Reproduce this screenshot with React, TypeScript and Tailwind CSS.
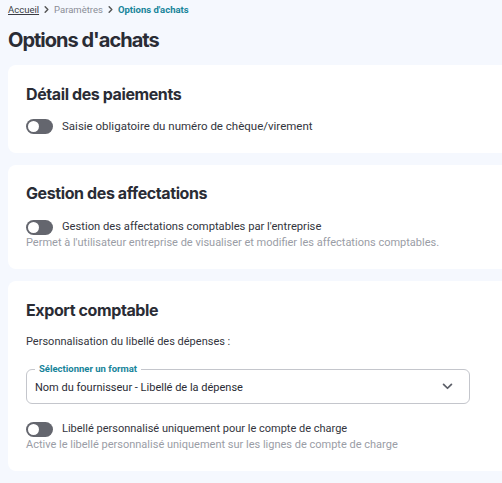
import React from "react";

function Toggle() {
  return (
    <div className="w-[27px] h-[15px] rounded-full bg-[#64666e] flex items-center px-[2px] shrink-0">
      <div className="w-[11px] h-[11px] rounded-full bg-white" />
    </div>
  );
}

function Chevron({ className }: { className?: string }) {
  return (
    <svg viewBox="0 0 10 10" className={className} fill="none" stroke="currentColor" strokeWidth="1.6" strokeLinecap="round" strokeLinejoin="round">
      <path d="M3.5 2 L6.5 5 L3.5 8" />
    </svg>
  );
}

const head = { fontFamily: "Inter, 'Noto Sans', sans-serif" };

export default function App() {
  return (
    <div className="w-full min-h-[483px] bg-[#f5f8fe] overflow-hidden text-[#2a2c35]" style={{ fontFamily: "Roboto, 'Noto Sans', sans-serif" }}>
      <div className="pl-2 w-[540px]">
        <div className="flex items-center gap-[3px] text-[9.5px] h-[18px] pt-[1px] leading-none">
          <span className="underline text-[#3a3c44]">Accueil</span>
          <Chevron className="w-[9px] h-[9px] text-[#555]" />
          <span className="text-[#8a8d96]">Paramètres</span>
          <Chevron className="w-[9px] h-[9px] text-[#555]" />
          <span className="text-[#17849a] font-bold">Options d'achats</span>
        </div>
        <h1 className="text-[20px] font-bold leading-[24px] mt-[10px] tracking-[-1px]" style={head}>Options d'achats</h1>

        <div className="mt-[13px] bg-white rounded-[8px] pl-[18px] pt-[19px] pb-[19px]">
          <h2 className="text-[16px] font-bold leading-[20px] tracking-[-0.4px]" style={head}>Détail des paiements</h2>
          <div className="mt-[14px] flex items-center gap-[9px] h-[16px]">
            <Toggle />
            <span className="text-[11.5px] leading-[16px] text-[#33353d]">Saisie obligatoire du numéro de chèque/virement</span>
          </div>
        </div>

        <div className="mt-[12px] bg-white rounded-[8px] pl-[18px] pt-[18px] pb-[19px]">
          <h2 className="text-[16px] font-bold leading-[20px] tracking-[-0.4px]" style={head}>Gestion des affectations</h2>
          <div className="mt-[16px] flex items-center gap-[9px] h-[16px]">
            <Toggle />
            <span className="text-[11.2px] leading-[16px] text-[#33353d]">Gestion des affectations comptables par l'entreprise</span>
          </div>
          <p className="text-[11px] leading-[15px] text-[#9a9da6]">Permet à l'utilisateur entreprise de visualiser et modifier les affectations comptables.</p>
        </div>

        <div className="mt-[12px] bg-white rounded-[8px] pl-[18px] pt-[19px] pb-[19px]">
          <h2 className="text-[16px] font-bold leading-[20px] tracking-[-0.4px]" style={head}>Export comptable</h2>
          <p className="mt-[14px] text-[11px] leading-[16px] text-[#33353d]">Personnalisation du libellé des dépenses :</p>
          <div className="mt-[19px] relative w-[444px] h-[35px] border border-[#c4c6cc] rounded-[6px] flex items-center justify-between pl-[8px] pr-[16px]">
            <span className="absolute -top-[7px] left-[8px] bg-white px-[4px] text-[9.5px] leading-[12px] font-bold text-[#17849a]">Sélectionner un format</span>
            <span className="text-[11px] text-[#2a2c35] mt-[4px]">Nom du fournisseur - Libellé de la dépense</span>
            <svg viewBox="0 0 12 8" className="w-[11px] h-[7px] text-[#5c5f68]" fill="none" stroke="currentColor" strokeWidth="2" strokeLinecap="round" strokeLinejoin="round">
              <path d="M1.5 1.5 L6 6 L10.5 1.5" />
            </svg>
          </div>
          <div className="mt-[17px] flex items-center gap-[9px] h-[16px]">
            <Toggle />
            <span className="text-[11px] leading-[16px] text-[#33353d]">Libellé personnalisé uniquement pour le compte de charge</span>
          </div>
          <p className="text-[11px] leading-[15px] text-[#9a9da6]">Active le libellé personnalisé uniquement sur les lignes de compte de charge</p>
        </div>
      </div>
    </div>
  );
}
